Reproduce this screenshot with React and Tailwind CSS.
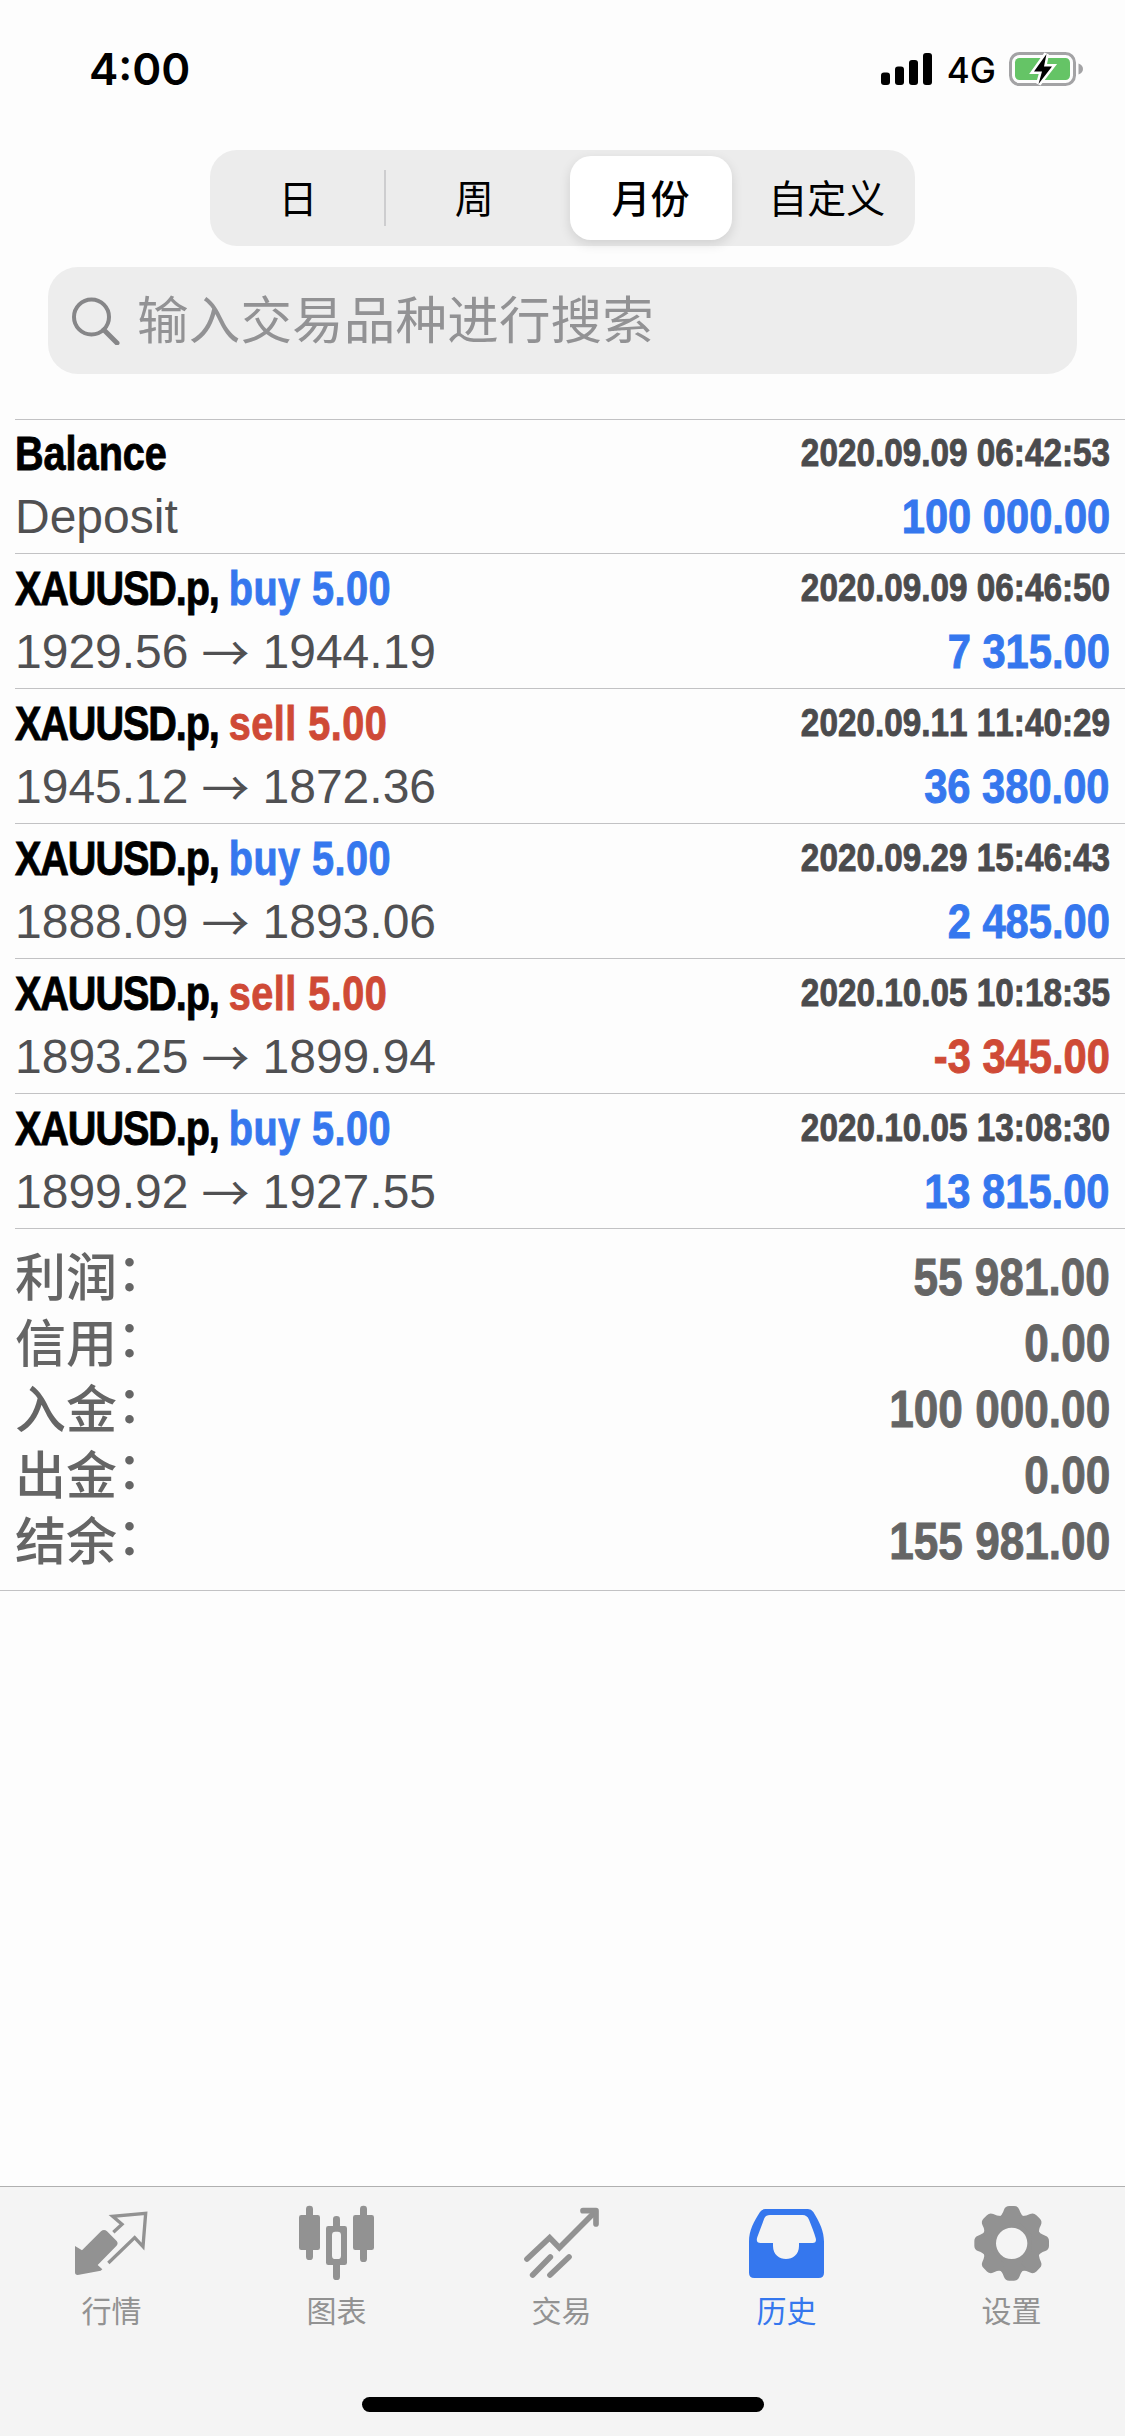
import React, { useState } from 'react';

const deals = [
    { id: 1, symbol: 'Balance', comment: 'Deposit', time: '2020.09.09 06:42:53', profit: '100 000.00' },
    { id: 2, symbol: 'XAUUSD.p', side: 'buy', volume: '5.00', open: '1929.56', close: '1944.19', time: '2020.09.09 06:46:50', profit: '7 315.00' },
    { id: 3, symbol: 'XAUUSD.p', side: 'sell', volume: '5.00', open: '1945.12', close: '1872.36', time: '2020.09.11 11:40:29', profit: '36 380.00' },
    { id: 4, symbol: 'XAUUSD.p', side: 'buy', volume: '5.00', open: '1888.09', close: '1893.06', time: '2020.09.29 15:46:43', profit: '2 485.00' },
    { id: 5, symbol: 'XAUUSD.p', side: 'sell', volume: '5.00', open: '1893.25', close: '1899.94', time: '2020.10.05 10:18:35', profit: '-3 345.00' },
    { id: 6, symbol: 'XAUUSD.p', side: 'buy', volume: '5.00', open: '1899.92', close: '1927.55', time: '2020.10.05 13:08:30', profit: '13 815.00' },
];

const totals = [
    { label: '利润', value: '55 981.00' },
    { label: '信用', value: '0.00' },
    { label: '入金', value: '100 000.00' },
    { label: '出金', value: '0.00' },
    { label: '结余', value: '155 981.00' },
];

// condensed bold, squeezed horizontally with a scale-x class at each use
const condensed = "font-['Liberation_Sans',sans-serif] font-bold [-webkit-text-stroke:0.9px_currentColor]";

const StatusBar = () => (
    <div className="flex h-[150px] items-start justify-between pl-[89px] pr-[42px] pt-[45px]">
        <span className="font-['Inter',sans-serif] text-[44px] font-semibold leading-[48px]">4:00</span>
        <div className="flex h-12 items-center">
            <svg width="51" height="32" viewBox="0 0 51 32" className="mr-[15px]">
                <rect x="0" y="19.5" width="9" height="12.5" rx="3" />
                <rect x="14" y="13.5" width="9" height="18.5" rx="3" />
                <rect x="28" y="7" width="9" height="25" rx="3" />
                <rect x="42" y="0" width="9" height="32" rx="3" />
            </svg>
            <span className="mr-[13px] pt-[2px] font-['Inter',sans-serif] text-[35px] font-[450] leading-[48px]">4G</span>
            <svg width="74" height="38" viewBox="0 0 74 38">
                <rect x="1.5" y="3.5" width="64" height="31" rx="9" fill="none" stroke="#a3a3a5" strokeWidth="3" />
                <rect x="6" y="8" width="55" height="22" rx="4.5" fill="#65c466" />
                <path d="M69.5 13.5c3 1 4.500 3 4.500 5.500s-1.500 4.500-4.500 5.500z" fill="#a3a3a5" />
                <path d="M37.500 4 25 21.500h8L29.500 34 43 16.500h-8z" fill="#000" stroke="#fff" strokeWidth="5" paintOrder="stroke" />
            </svg>
        </div>
    </div>
);

const PeriodTabs = () => {
    const [period, setPeriod] = useState('月份');
    const periods = ['日', '周', '月份', '自定义'];

    return (
        <div className="mx-auto flex h-24 w-[705px] items-center rounded-[27px] bg-[#ececec] font-['Noto_Sans_CJK_SC',sans-serif] text-[39px]">
            {periods.map((p, i) => (
                <React.Fragment key={p}>
                    {i === 1 && <div className="-ml-0.5 h-14 w-[2px] bg-[#cdcdcf]" />}
                    <button
                        onClick={() => setPeriod(p)}
                        className={`flex h-full flex-1 items-center justify-center ${p === period ? 'font-medium' : 'pb-1'}`}
                    >
                        {p === period ? (
                            <span className="flex h-[84px] w-[162px] items-center justify-center rounded-[21px] bg-white pb-1 shadow-[0_4px_12px_rgba(0,0,0,0.12)]">{p}</span>
                        ) : p}
                    </button>
                </React.Fragment>
            ))}
        </div>
    );
};

const SearchBar = () => (
    <div className="mx-12 mt-[21px] flex h-[107px] items-center rounded-[30px] bg-[#ededed] pl-6 text-[#929294]">
        <svg width="48" height="48" viewBox="0 0 48 48" fill="none" stroke="#868688">
            <circle cx="19.500" cy="20" r="17.500" strokeWidth="4" />
            <path d="M32 33 45 46" strokeWidth="5" strokeLinecap="round" />
        </svg>
        <span className="ml-[17px] pb-[8px] font-['Noto_Sans_CJK_SC',sans-serif] text-[51.500px] leading-[60px] tracking-[0.2px]">输入交易品种进行搜索</span>
    </div>
);

const DealRow = ({ deal }) => {
    const sideColor = deal.side === 'sell' ? 'text-[#cf4a36]' : 'text-[#3577ee]';
    const profitColor = deal.profit.startsWith('-') ? 'text-[#cf4a36]' : 'text-[#3577ee]';

    return (
        <div className="ml-[15px] h-[135px] border-t border-[#c2c2c4] pr-[15px] pt-[3px] first:h-[134px] first:pt-[2px]">
            <div className="flex h-[63px] items-center justify-between">
                <div className={`${condensed} origin-left scale-x-[0.825] whitespace-pre text-[48px] text-black`}>
                    {deal.side ? (
                        <>
                            <span className="tracking-[-1.3px]">{deal.symbol}, </span>
                            <span className={`tracking-[0.6px] ${sideColor}`}>{deal.side} {deal.volume}</span>
                        </>
                    ) : deal.symbol}
                </div>
                <div className={`${condensed} origin-right scale-x-[0.854] text-[39px] text-[#4b4b4d] [font-kerning:none]`}>{deal.time}</div>
            </div>
            <div className="flex h-[63px] items-center justify-between">
                <div className="flex items-center font-['Liberation_Sans',sans-serif] text-[48px] text-[#505052]">
                    {deal.comment || (
                        <>
                            {deal.open}
                            <span className="mx-[13px] w-[48px] pb-[3px] text-center font-['Noto_Sans_CJK_SC',sans-serif] leading-[60px]">→</span>
                            {deal.close}
                        </>
                    )}
                </div>
                <div className={`${condensed} origin-right scale-x-[0.868] text-[48px] [font-kerning:none] ${profitColor}`}>{deal.profit}</div>
            </div>
        </div>
    );
};

const Totals = () => (
    <div className="h-[362px] pl-[15px]">
        <div className="border-t border-[#c2c2c4] pr-[15px] pt-[15px]">
            {totals.map(({ label, value }) => (
                <div key={label} className="flex h-[66px] items-center justify-between text-[51px] leading-[60px] text-[#656565]">
                    <div className="flex pb-[7px] font-medium">
                        <span className="font-['Noto_Sans_CJK_SC',sans-serif]">{label}</span>
                        <span className="-ml-[13px] -mt-0.5 font-['Noto_Sans_CJK_JP',sans-serif]">：</span>
                    </div>
                    <span className={`${condensed} origin-right scale-x-[0.866] pt-[2px] [font-kerning:none]`}>{value}</span>
                </div>
            ))}
        </div>
    </div>
);

const QuotesIcon = () => (
    <svg width="75" height="75" viewBox="105 105 225 225" className="overflow-visible" fill="currentColor">
        <path d="M105 228 126 241 183 184Q192 176 201 184L230 213Q236 220 229 228L173 285 187 298 182 302 113 315Q105 315 105 307Z" />
        <path d="M220 187 246 163 218 139 317 130 309 230 284 203 205 279" fill="none" stroke="currentColor" strokeWidth="10" />
    </svg>
);

const ChartIcon = () => (
    <svg width="75" height="75" viewBox="780 105 225 225" className="overflow-visible" fill="currentColor">
        <rect x="798" y="107" width="21" height="163" rx="10" />
        <rect x="777" y="135" width="63" height="105" rx="7" />
        <rect x="879" y="138" width="21" height="192" rx="10" />
        <rect x="858" y="168" width="63" height="117" rx="7" />
        <rect x="876" y="185" width="27" height="82" rx="10" fill="#f4f4f4" />
        <rect x="960" y="107" width="21" height="169" rx="10" />
        <rect x="939" y="135" width="63" height="105" rx="7" />
    </svg>
);

const TradeIcon = () => (
    <svg width="75" height="75" viewBox="135 105 225 225" className="overflow-visible" fill="none" stroke="currentColor" strokeWidth="17" strokeLinecap="round">
        <path d="M141 267 209 203 238 233 344 127" />
        <path d="M309 122H348V162" strokeLinejoin="round" />
        <path d="M158 315 211 261M210 315 267 261" />
    </svg>
);

const HistoryIcon = () => (
    <svg width="75" height="75" viewBox="810 105 225 225" className="overflow-visible" fill="currentColor">
        <path
            fillRule="evenodd"
            d="M856 117H984Q994 117 1000 126C1020 158 1032 185 1032 215V308Q1032 324 1016 324H823Q807 324 807 308V215C807 180 822 155 840 126Q846 117 856 117ZM870 135Q858 135 853 145L832 201Q826 219 842 219H879V228C879 280 957 280 957 228V219H998Q1011 219 1007 204C1003 188 995 170 987 149Q981 135 968 135Z"
        />
    </svg>
);

const SettingsIcon = () => (
    <svg width="75" height="75" viewBox="225 105 225 225" className="overflow-visible" fill="currentColor">
        <circle cx="335" cy="220" r="68" fill="none" stroke="currentColor" strokeWidth="42" />
        {[0, 45, 90, 135, 180, 225, 270, 315].map((angle) => (
            <path key={angle} transform={`rotate(${angle} 335 220)`} d="M293 145Q307 136 312 119 316 108 328 108H342Q354 108 358 119 363 136 377 145L362 160H308Z" />
        ))}
    </svg>
);

const navItems = [
    { label: '行情', Icon: QuotesIcon },
    { label: '图表', Icon: ChartIcon },
    { label: '交易', Icon: TradeIcon },
    { label: '历史', Icon: HistoryIcon, active: true },
    { label: '设置', Icon: SettingsIcon },
];

const TabBar = () => (
    <nav className="mt-auto flex h-[250px] flex-col border-t border-[#b0b0b0] bg-[#f4f4f4]">
        <div className="grid grid-cols-5 pt-[18px]">
            {navItems.map(({ label, Icon, active }) => (
                <button key={label} className={`flex flex-col items-center ${active ? 'text-[#3577ee]' : 'text-[#929292]'}`}>
                    <Icon />
                    <span className="mr-[2px] mt-[9px] font-['Noto_Sans_CJK_SC',sans-serif] text-[30px] leading-10">{label}</span>
                </button>
            ))}
        </div>
        <div className="mx-auto mb-6 mt-auto h-[15px] w-[402px] rounded-full bg-black" />
    </nav>
);

const App = () => (
    <div className="flex h-[2436px] w-[1125px] flex-col bg-[#fdfdfd] text-black">
        <StatusBar />
        <PeriodTabs />
        <SearchBar />
        <div className="mt-[45px]">
            {deals.map((deal) => <DealRow key={deal.id} deal={deal} />)}
        </div>
        <Totals />
        <div className="h-px bg-[#c2c2c4]" />
        <TabBar />
    </div>
);

export default App;
